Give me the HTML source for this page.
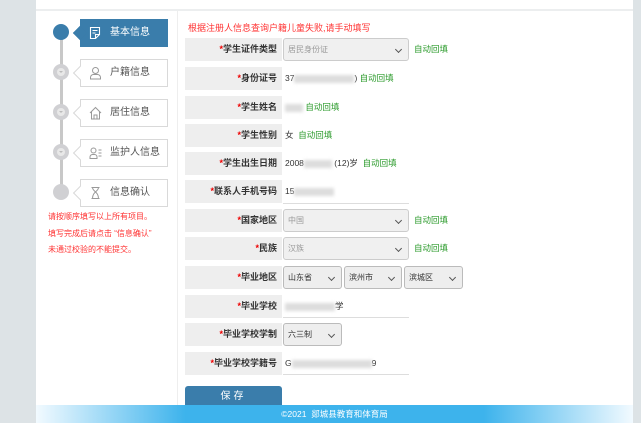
<!DOCTYPE html><html><head><meta charset="utf-8"><style>
*{margin:0;padding:0;box-sizing:border-box}
body{width:641px;height:423px;background:#dde3e6;position:relative;overflow:hidden;font-family:"Liberation Sans","Noto Sans CJK SC",sans-serif;font-size:9px;color:#333}
.main{position:absolute;left:36px;top:0;width:597px;height:423px;background:#fff}
.topline{position:absolute;left:36px;top:9px;width:597px;height:2px;background:#eceeef}
.vdiv{position:absolute;left:177px;top:11px;width:1px;height:394px;background:#eee}
.foot{position:absolute;left:36px;top:405px;width:597px;height:18px;background:linear-gradient(90deg,#f2faff 0%,#3db3ec 25%,#3db3ec 75%,#f2faff 100%);color:#fff;text-align:center;font-size:8.5px;line-height:18px}
.line{position:absolute;left:60px;top:32px;width:3px;height:160px;background:#c8c8c8}
.dot{position:absolute;left:53px;width:16px;height:16px;border-radius:50%;background:#d0d0d3}
.dot.a{background:#3a7dab}
.dot i{position:absolute;left:4px;top:4px;width:8px;height:8px;border-radius:50%;background:#e8e8e8}
.dot i:after{content:"";position:absolute;left:2px;top:3px;border:2px solid transparent;border-top:2.5px solid #bbb}
.step{position:absolute;left:80px;width:88px;height:28px;border:1px solid #d9d9d9;background:#fff;color:#555;font-size:10px;line-height:26px;padding-left:29px}
.step:before{content:"";position:absolute;left:-6px;top:8px;width:9px;height:9px;background:#fff;border-left:1px solid #d9d9d9;border-bottom:1px solid #d9d9d9;transform:rotate(45deg)}
.step.a{background:#3a7dab;border-color:#3a7dab;color:#fff}
.step.a:before{background:#3a7dab;border-color:#3a7dab}
.step svg{position:absolute;left:8px;top:6px}
.tip{position:absolute;left:48px;color:#f33;font-size:8px}
.lbl{position:absolute;left:185px;width:97px;height:23px;background:#eee;text-align:right;padding-right:5px;font-weight:bold;font-size:9px;line-height:23px;color:#333}
.lbl b{color:#e00}
.val{position:absolute;left:285px;font-size:8.5px;line-height:23px;color:#333}
.g{color:#2a9a2a}
.sel{position:absolute;height:23px;background:#f0f0f0;border:1px solid #ccc;border-radius:3px;font-size:8px;line-height:21px;padding-left:4px;color:#999}
.sel:after{content:"";position:absolute;right:7px;top:8px;width:4px;height:4px;border-right:1px solid #555;border-bottom:1px solid #555;transform:rotate(45deg)}
.sel.d{color:#333;background:#eee;border-color:#bbb}
.ul{position:absolute;left:283px;width:126px;height:1px;background:#ddd}
.blur{display:inline-block;background:#ddd;height:8px;vertical-align:middle;filter:blur(1.5px)}
.btn{position:absolute;left:185px;top:386px;width:97px;height:22px;background:#3a7dab;border-radius:3px;color:#fff;text-align:center;line-height:21px;font-size:10px;letter-spacing:3px}
</style></head><body>
<div class="main"></div><div class="topline"></div><div class="vdiv"></div>
<div class="line"></div>
<div class="dot a" style="top:24px"></div>
<div class="dot" style="top:64px"><i></i></div>
<div class="dot" style="top:104px"><i></i></div>
<div class="dot" style="top:144px"><i></i></div>
<div class="dot" style="top:184px"></div>
<div class="step a" style="top:19px"><svg width="13" height="14" viewBox="0 0 13 14" fill="none" stroke="#fff" stroke-width="1.1"><path d="M1.5 1.5h9v7l-4 4h-5z M6.5 12.5v-4h4 M3.5 4.5h5 M3.5 7h3"/></svg>基本信息</div>
<div class="step" style="top:59px"><svg width="13" height="14" viewBox="0 0 13 14" fill="none" stroke="#999" stroke-width="1"><circle cx="6.5" cy="4.5" r="3"/><path d="M1.5 13v-1.5a3 3 0 0 1 3-3h4a3 3 0 0 1 3 3V13z"/></svg>户籍信息</div>
<div class="step" style="top:99px"><svg width="13" height="14" viewBox="0 0 13 14" fill="none" stroke="#999" stroke-width="1"><path d="M1 7L6.5 1.5 12 7 M2.5 5.5V13h8V5.5 M5 13V9h3v4"/></svg>居住信息</div>
<div class="step" style="top:139px"><svg width="13" height="14" viewBox="0 0 13 14" fill="none" stroke="#999" stroke-width="1"><circle cx="4.5" cy="4.5" r="2.5"/><path d="M1 12.5v-1.5a2.5 2.5 0 0 1 2.5-2.5h2a2.5 2.5 0 0 1 2.5 2.5v1.5z M9.5 4h3M9.5 7h3M9.5 10h3"/></svg>监护人信息</div>
<div class="step" style="top:179px"><svg width="13" height="14" viewBox="0 0 13 14" fill="none" stroke="#999" stroke-width="1"><path d="M2.5 1.5h8M2.5 12.5h8M3.5 1.5c0 4 6 4 6 11M9.5 1.5c0 4-6 4-6 11"/></svg>信息确认</div>
<div class="tip" style="top:211px">请按顺序填写以上所有项目。</div>
<div class="tip" style="top:228px">填写完成后请点击 “信息确认”</div>
<div class="tip" style="top:244px">未通过校验的不能提交。</div>
<div style="position:absolute;left:188px;top:21px;color:#f33;font-size:9px">根据注册人信息查询户籍儿童失败,请手动填写</div>

<div class="lbl" style="top:38px"><b>*</b>学生证件类型</div>
<div class="sel" style="left:283px;top:38px;width:126px">居民身份证</div><div class="val g" style="left:414px;top:38px">自动回填</div>
<div class="lbl" style="top:67px"><b>*</b>身份证号</div>
<div class="val" style="top:67px">37<span class="blur" style="width:60px"></span>) <span class="g">自动回填</span></div>
<div class="lbl" style="top:96px"><b>*</b>学生姓名</div>
<div class="val" style="top:96px"><span class="blur" style="width:18px"></span> <span class="g">自动回填</span></div>
<div class="lbl" style="top:124px"><b>*</b>学生性别</div>
<div class="val" style="top:124px">女 &nbsp;<span class="g">自动回填</span></div>
<div class="lbl" style="top:152px"><b>*</b>学生出生日期</div>
<div class="val" style="top:152px">2008<span class="blur" style="width:28px"></span> (12)岁 &nbsp;<span class="g">自动回填</span></div>
<div class="lbl" style="top:180px"><b>*</b>联系人手机号码</div>
<div class="val" style="top:180px">15<span class="blur" style="width:40px"></span></div>
<div class="ul" style="top:203px"></div>
<div class="lbl" style="top:209px"><b>*</b>国家地区</div>
<div class="sel" style="left:283px;top:209px;width:126px">中国</div><div class="val g" style="left:414px;top:209px">自动回填</div>
<div class="lbl" style="top:237px"><b>*</b>民族</div>
<div class="sel" style="left:283px;top:237px;width:126px">汉族</div><div class="val g" style="left:414px;top:237px">自动回填</div>
<div class="lbl" style="top:266px"><b>*</b>毕业地区</div>
<div class="sel d" style="left:283px;top:266px;width:59px">山东省</div>
<div class="sel d" style="left:344px;top:266px;width:58px">滨州市</div>
<div class="sel d" style="left:404px;top:266px;width:59px">滨城区</div>
<div class="lbl" style="top:295px"><b>*</b>毕业学校</div>
<div class="val" style="top:295px"><span class="blur" style="width:50px"></span>学</div>
<div class="ul" style="top:317px"></div>
<div class="lbl" style="top:323px"><b>*</b>毕业学校学制</div>
<div class="sel d" style="left:283px;top:323px;width:59px">六三制</div>
<div class="lbl" style="top:352px"><b>*</b>毕业学校学籍号</div>
<div class="val" style="top:352px">G<span class="blur" style="width:80px"></span>9</div>
<div class="ul" style="top:374px"></div>
<div class="btn">保存</div>
<div class="foot">©2021 &nbsp;郯城县教育和体育局</div>
</body></html>
